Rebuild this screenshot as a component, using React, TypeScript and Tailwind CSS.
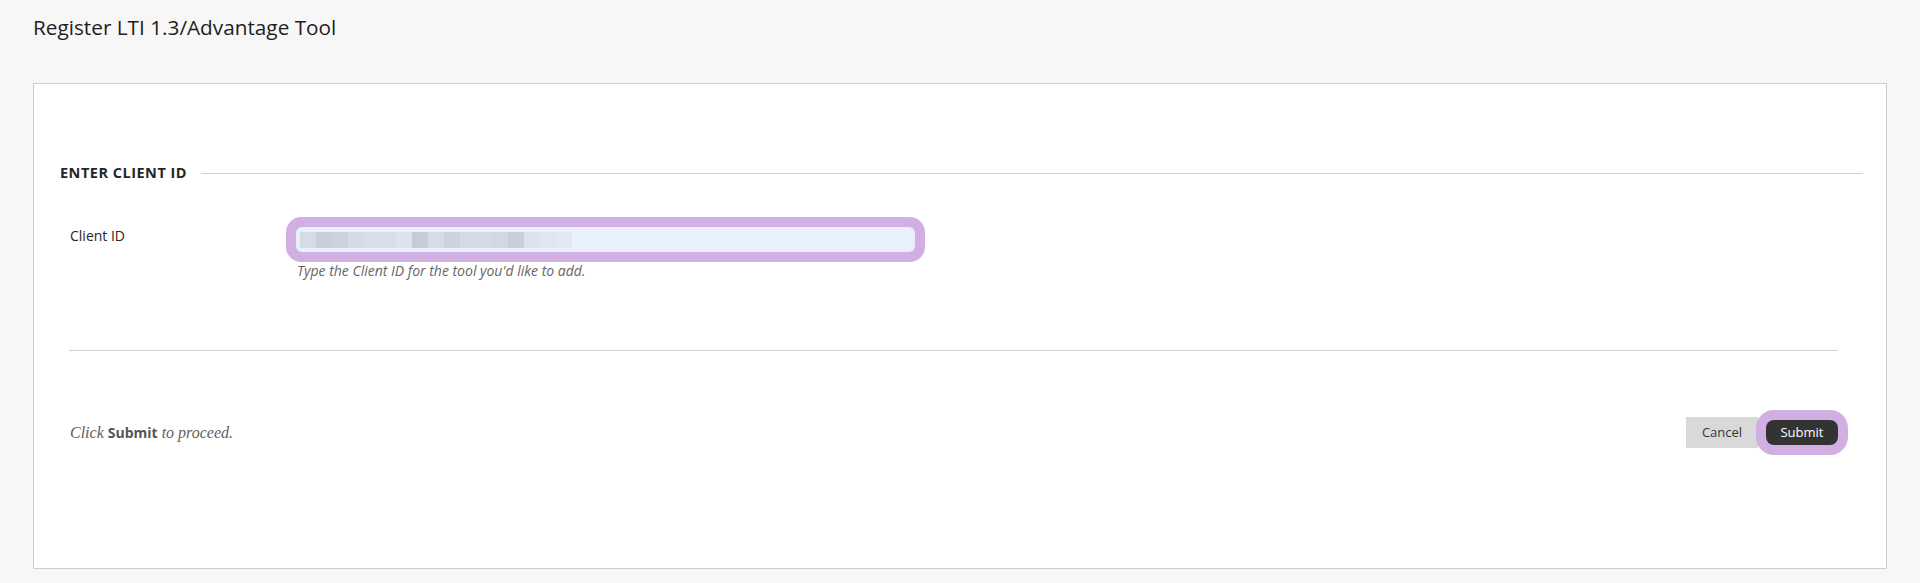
import React from 'react';

// pixelated (blurred) client id value, drawn as grey blocks
const BLUR_BLOCKS = [
  '#d6dce7', '#c8ceda', '#ccd2dd', '#d4dae5', '#d8dee9', '#d8dee9', '#dde3ee', '#c6cbd5',
  '#d6dce7', '#cdd3de', '#d4dae5', '#d4dae5', '#d2d8e3', '#c9cfda', '#dce2ed', '#e0e6f1', '#e2e8f3',
];

const App: React.FC = () => {
  return (
    <div className="min-h-screen bg-[#f7f7f7] font-['Open_Sans',sans-serif] text-[#262626]">
      <h1 className="pl-[33px] pt-[13px] text-[20.75px] leading-[28px] font-normal text-[#1e1e1e]">
        Register LTI 1.3/Advantage Tool
      </h1>

      <div className="mx-[33px] mt-[42px] h-[486px] border border-[#cdcdcd] bg-white">
        {/* fieldset heading */}
        <div className="flex items-center pl-[26px] pr-[23px] pt-[79px]">
          <h2 className="text-[14.5px] leading-[20px] font-bold tracking-[0.5px] text-[#262626]">ENTER CLIENT ID</h2>
          <div className="ml-[14px] h-px flex-1 bg-[#d2d2d2]" />
        </div>

        <div className="mt-[44px] flex items-start pl-[36px]">
          <label className="w-[226px] text-[14px] leading-[18px] text-[#262626]">Client ID</label>
          <div>
            <div className="flex h-[25px] w-[619px] items-center rounded-[6px] bg-[#e8f0fe] pl-[4px] shadow-[0_0_0_10px_#d1afe3]">
              {BLUR_BLOCKS.map((c, i) => (
                <span key={i} className="h-[16px] w-[16px]" style={{ backgroundColor: c }} />
              ))}
            </div>
            <p className="mt-[10px] pl-px text-[14px] leading-[18px] italic text-[#666]">
              Type the Client ID for the tool you'd like to add.
            </p>
          </div>
        </div>

        <div className="ml-[35px] mr-[48px]">
          <div className="mt-[70px] h-px bg-[#d2d2d2]" />
          <div className="mt-[66px] flex items-center justify-between pl-px">
            <p className="font-['Liberation_Serif',serif] text-[16px] italic text-[#5e5e5e]">
              Click <span className="font-['Open_Sans',sans-serif] text-[14px] font-bold not-italic text-[#555]">Submit</span> to proceed.
            </p>
            <div className="flex items-center">
              <button className="h-[31px] w-[72px] bg-[#d9d9d9] text-[13px] text-[#333]">Cancel</button>
              <button className="ml-[8px] h-[25px] w-[72px] rounded-[8px] bg-[#333] text-[13px] text-white shadow-[0_0_0_10px_#d1afe3]">
                Submit
              </button>
            </div>
          </div>
        </div>
      </div>
    </div>
  );
};

export default App;
